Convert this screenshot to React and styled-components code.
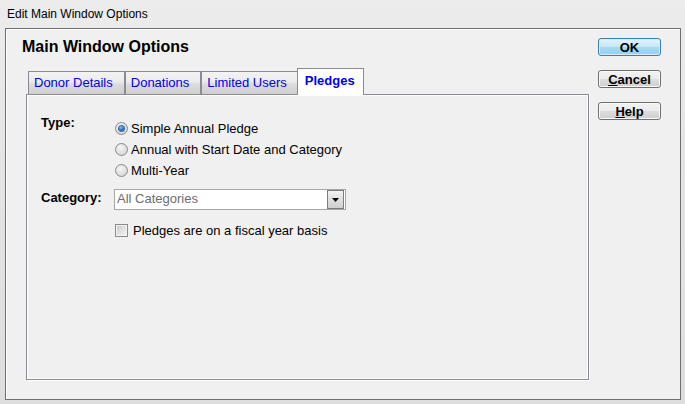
import React, { useState } from 'react';
import styled, { createGlobalStyle } from 'styled-components';

const GlobalStyle = createGlobalStyle`
  html, body {
    margin: 0;
    padding: 0;
    background: #e3e3e3;
  }
  body {
    font-family: "Liberation Sans", Arial, sans-serif;
    font-size: 13px;
    color: #000;
  }
`;

const TABS = ['Donor Details', 'Donations', 'Limited Users', 'Pledges'];

const PLEDGE_TYPES = [
  'Simple Annual Pledge',
  'Annual with Start Date and Category',
  'Multi-Year',
];

const App = () => {
  const [tab, setTab] = useState('Pledges');
  const [type, setType] = useState(PLEDGE_TYPES[0]);
  const [fiscal, setFiscal] = useState(false);

  return (
    <>
      <GlobalStyle />
      <Window>
        <TitleBar>Edit Main Window Options</TitleBar>
        <Frame>
          <MainColumn>
            <Heading>Main Window Options</Heading>
            <TabStrip>
              {TABS.map(name => (
                <Tab key={name} $active={tab === name} onClick={() => setTab(name)}>
                  {name}
                </Tab>
              ))}
            </TabStrip>
            <TabPane>
              <Row>
                <FieldLabel>Type:</FieldLabel>
                <RadioList>
                  {PLEDGE_TYPES.map(t => (
                    <Option key={t} onClick={() => setType(t)}>
                      <Radio $checked={type === t} />
                      {t}
                    </Option>
                  ))}
                </RadioList>
              </Row>
              <Row $mt={8}>
                <FieldLabel $mt={1}>Category:</FieldLabel>
                <Combo>
                  <ComboText>All Categories</ComboText>
                  <ComboButton>
                    <svg width="7" height="4" viewBox="0 0 7 4">
                      <path d="M0 0h7L3.5 4z" fill="#000" />
                    </svg>
                  </ComboButton>
                </Combo>
              </Row>
              <Row $mt={13}>
                <FieldLabel />
                <CheckRow onClick={() => setFiscal(!fiscal)}>
                  <CheckBox $checked={fiscal} />
                  Pledges are on a fiscal year basis
                </CheckRow>
              </Row>
            </TabPane>
          </MainColumn>
          <ButtonColumn>
            <DialogButton $default>OK</DialogButton>
            <DialogButton><u>C</u>ancel</DialogButton>
            <DialogButton><u>H</u>elp</DialogButton>
          </ButtonColumn>
        </Frame>
      </Window>
    </>
  );
};

const Window = styled.div`
  width: 685px;
  height: 404px;
  display: flex;
  flex-direction: column;
  background: linear-gradient(180deg, #ececec 0%, #e4e4e4 40%, #dedede 100%);
  overflow: hidden;
`;

const TitleBar = styled.div`
  height: 28px;
  line-height: 28px;
  padding-left: 7px;
  font-size: 12px;
  color: #000;
  flex-shrink: 0;
`;

const Frame = styled.div`
  flex: 1;
  margin: 0 4px 4px 5px;
  border: 1px solid #6f6f6f;
  box-shadow: inset 1px 1px 0 #fff;
  background: #f0f0f0;
  display: flex;
  gap: 9px;
  padding: 8px 0 0 16px;
`;

const MainColumn = styled.div`
  width: 567px;
  display: flex;
  flex-direction: column;
`;

const Heading = styled.div`
  font-size: 16px;
  font-weight: bold;
  line-height: 19px;
`;

const TabStrip = styled.div`
  display: flex;
  align-items: flex-end;
  height: 26px;
  margin: 12px 0 0 6px;
`;

const Tab = styled.div`
  box-sizing: border-box;
  border: 1px solid #898c95;
  color: #0000e6;
  cursor: default;
  white-space: nowrap;
  height: 23px;
  line-height: 21px;
  padding: 0 11px 0 5px;
  background: linear-gradient(180deg, #f3f3f3 0%, #ebebeb 45%, #dcdcdc 55%, #cfcfcf 100%);
  border-bottom: none;
  margin-right: -1px;

  &:not(:first-child) {
    margin-left: 1px;
  }

  ${p => p.$active && `
    position: relative;
    z-index: 1;
    height: 27px;
    line-height: 24px;
    margin-bottom: -1px;
    margin-left: -1px !important;
    padding: 0 8px 0 7px;
    font-weight: bold;
    background: #fff;
  `}
`;

const TabPane = styled.div`
  box-sizing: border-box;
  width: 563px;
  height: 286px;
  margin-left: 4px;
  border: 1px solid #898c95;
  box-shadow: inset 1px 1px 0 #fff, inset -1px -1px 0 #fff, 1px 1px 0 #fff;
  background: #f0f0f0;
  padding: 20px 0 0 14px;
  display: flex;
  flex-direction: column;
`;

const Row = styled.div`
  display: flex;
  align-items: flex-start;
  margin-top: ${p => p.$mt || 0}px;
`;

const FieldLabel = styled.div`
  width: 74px;
  flex-shrink: 0;
  font-weight: bold;
  line-height: 15px;
  margin-top: ${p => p.$mt || 0}px;
`;

const RadioList = styled.div`
  display: flex;
  flex-direction: column;
  padding-top: 3px;
`;

const Option = styled.div`
  height: 21px;
  display: flex;
  align-items: center;
  gap: 3px;
  cursor: default;
`;

const Radio = styled.span`
  box-sizing: border-box;
  width: 13px;
  height: 13px;
  border-radius: 50%;
  border: 1px solid #8a8a8a;
  background: radial-gradient(circle at 40% 35%, #f6f6f6 0%, #dedede 60%, #cbcbcb 100%);
  display: flex;
  align-items: center;
  justify-content: center;

  &::after {
    content: '';
    display: ${p => (p.$checked ? 'block' : 'none')};
    width: 5px;
    height: 5px;
    border-radius: 50%;
    background: radial-gradient(circle at 40% 35%, #8cc4f0 0%, #2a6fc4 50%, #153f82 100%);
    box-shadow: 0 0 0 1px #3a6ea8;
  }
`;

const Combo = styled.div`
  box-sizing: border-box;
  width: 232px;
  height: 21px;
  margin-left: -1px;
  border: 1px solid #a6a6a6;
  background: #fff;
  display: flex;
  align-items: stretch;
`;

const ComboText = styled.div`
  flex: 1;
  padding: 0 0 2px 2px;
  line-height: 17px;
  color: #6d6d6d;
`;

const ComboButton = styled.div`
  box-sizing: border-box;
  width: 17px;
  border: 1px solid #7c7c7c;
  background: linear-gradient(180deg, #f2f2f2 0%, #e0e0e0 50%, #cfcfcf 100%);
  display: flex;
  align-items: center;
  justify-content: center;
  margin-right: 1px;
`;

const CheckRow = styled.div`
  height: 15px;
  line-height: 15px;
  display: flex;
  align-items: center;
  gap: 5px;
  cursor: default;
`;

const CheckBox = styled.span`
  box-sizing: border-box;
  width: 13px;
  height: 13px;
  border: 1px solid #8a8a8a;
  box-shadow: inset 0 0 0 1px #f4f4f4;
  background: linear-gradient(135deg, #c8c8c8 0%, #e0e0e0 50%, #f4f4f4 100%);
`;

const ButtonColumn = styled.div`
  display: flex;
  flex-direction: column;
  gap: 14px;
  padding-top: 1px;
`;

const DialogButton = styled.button`
  box-sizing: border-box;
  width: 63px;
  height: 18px;
  padding: 0;
  border-radius: 3px;
  font-family: "Liberation Sans", Arial, sans-serif;
  font-size: 13px;
  font-weight: bold;
  line-height: 15px;
  color: #000;
  border: 1px solid ${p => (p.$default ? '#3c7fb1' : '#707070')};
  box-shadow: inset 0 0 0 1px ${p => (p.$default ? '#d6eefb' : '#fbfbfb')};
  background: ${p =>
    p.$default
      ? 'linear-gradient(180deg, #e3f3fc 0%, #c6e6f7 50%, #a8d8f3 51%, #98cff0 100%)'
      : 'linear-gradient(180deg, #f2f2f2 0%, #ebebeb 50%, #dddddd 51%, #cfcfcf 100%)'};
  cursor: default;

  u {
    text-decoration-thickness: 1px;
  }
`;

export default App;
